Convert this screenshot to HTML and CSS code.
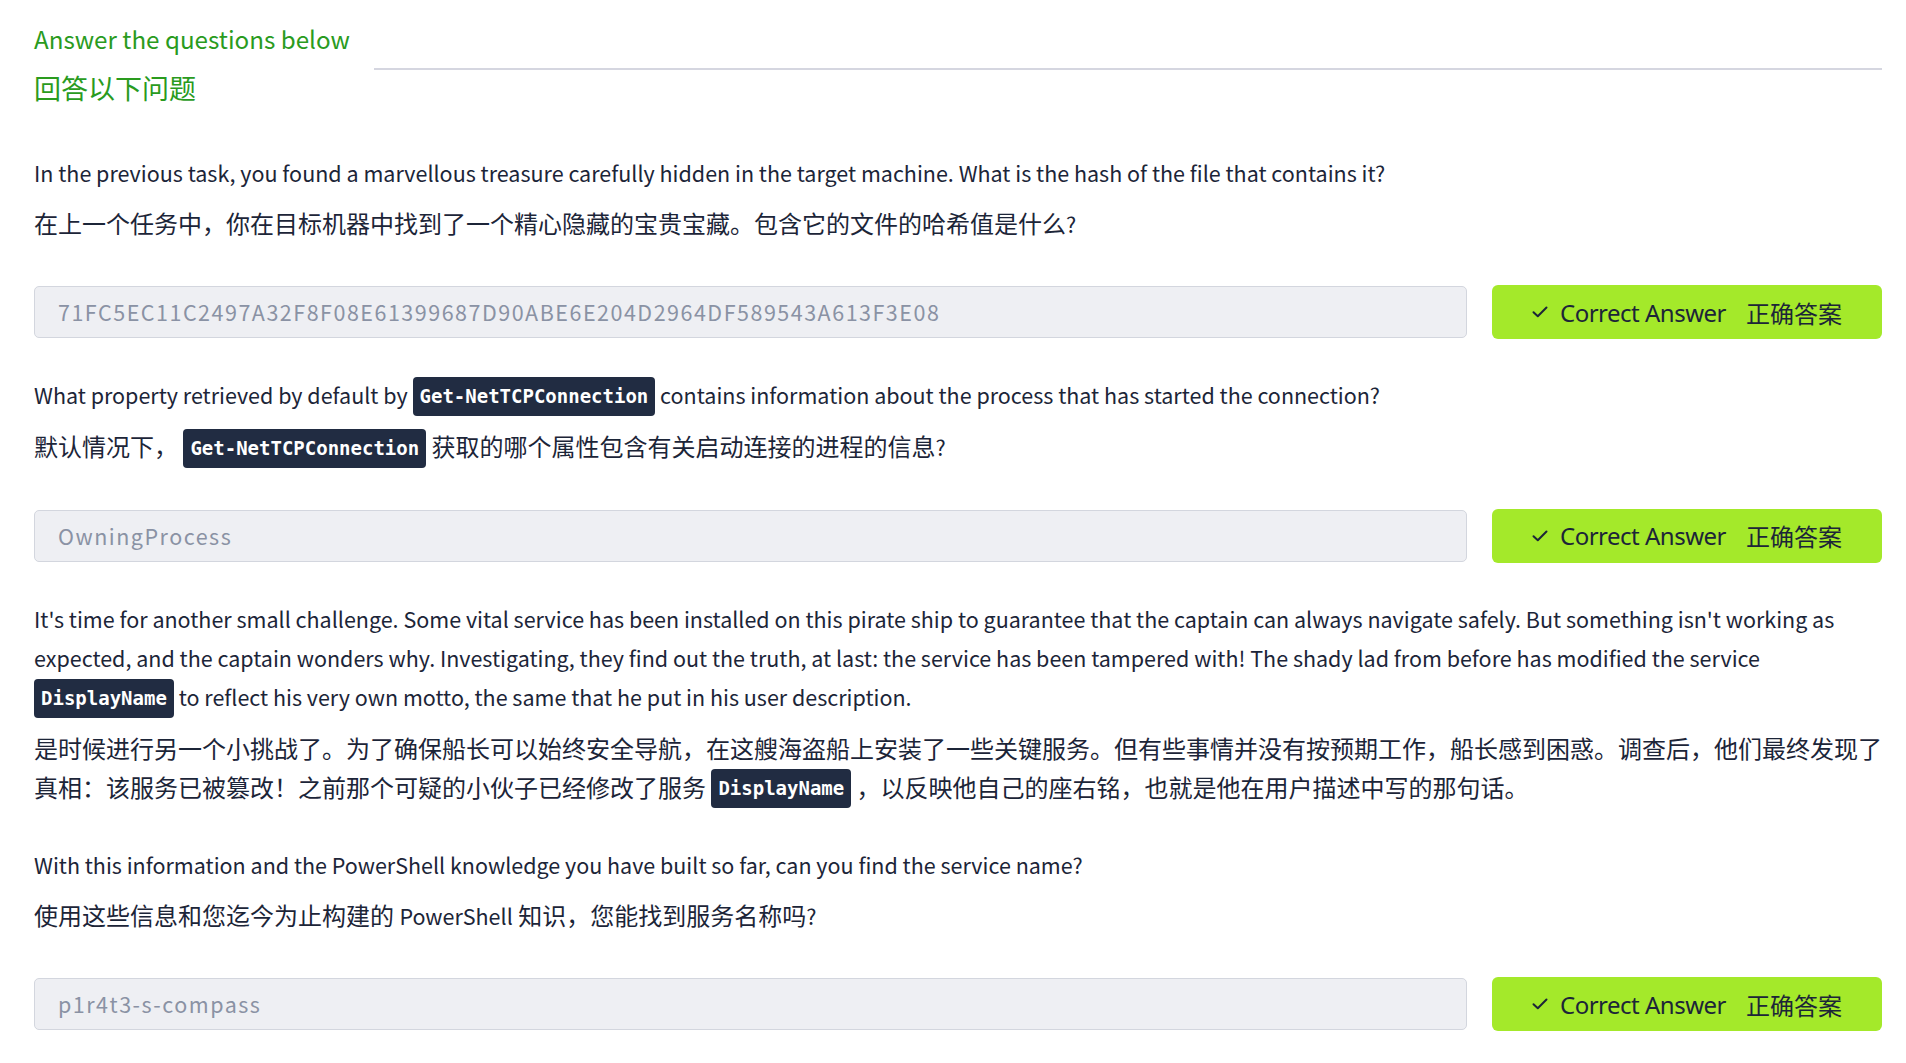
FILE: index.html
```html
<!DOCTYPE html>
<html lang="en">
<head>
<meta charset="utf-8">
<title>Answer the questions below</title>
<link rel="stylesheet" href="styles.css">
</head>
<body>
<main class="page">
  <header class="section-head">
    <div class="titles">
      <h3 class="title">Answer the questions below</h3>
      <h3 class="title title-cn">回答以下问题</h3>
    </div>
    <div class="rule"></div>
  </header>

  <section class="question">
    <div class="q-text">
      <p class="en">In the previous task, you found a marvellous treasure carefully hidden in the target machine. What is the hash of the file that contains it?</p>
      <p class="cn">在上一个任务中，你在目标机器中找到了一个精心隐藏的宝贵宝藏。包含它的文件的哈希值是什么<span class="lat">?</span></p>
    </div>
    <div class="answer-row">
      <div class="answer-input">71FC5EC11C2497A32F8F08E61399687D90ABE6E204D2964DF589543A613F3E08</div>
      <button class="correct-btn"><svg class="check" viewBox="0 0 16 12" width="16" height="12"><path d="M1.5 6.2 L5.8 10.2 L14.5 1.5" fill="none" stroke="currentColor" stroke-width="2" stroke-linecap="round" stroke-linejoin="round"/></svg><span class="btn-en">Correct Answer</span><span class="btn-cn">正确答案</span></button>
    </div>
  </section>

  <section class="question">
    <div class="q-text">
      <p class="en">What property retrieved by default by <code class="chip">Get-NetTCPConnection</code> contains information about the process that has started the connection?</p>
      <p class="cn">默认情况下， <code class="chip">Get-NetTCPConnection</code> 获取的哪个属性包含有关启动连接的进程的信息<span class="lat">?</span></p>
    </div>
    <div class="answer-row">
      <div class="answer-input">OwningProcess</div>
      <button class="correct-btn"><svg class="check" viewBox="0 0 16 12" width="16" height="12"><path d="M1.5 6.2 L5.8 10.2 L14.5 1.5" fill="none" stroke="currentColor" stroke-width="2" stroke-linecap="round" stroke-linejoin="round"/></svg><span class="btn-en">Correct Answer</span><span class="btn-cn">正确答案</span></button>
    </div>
  </section>

  <section class="question">
    <div class="q-text">
      <p class="en">It's time for another small challenge. Some vital service has been installed on this pirate ship to guarantee that the captain can always navigate safely. But something isn't working as expected, and the captain wonders why. Investigating, they find out the truth, at last: the service has been tampered with! The shady lad from before has modified the service <code class="chip">DisplayName</code> to reflect his very own motto, the same that he put in his user description.</p>
      <p class="cn">是时候进行另一个小挑战了。为了确保船长可以始终安全导航，在这艘海盗船上安装了一些关键服务。但有些事情并没有按预期工作，船长感到困惑。调查后，他们最终发现了真相：该服务已被篡改！之前那个可疑的小伙子已经修改了服务 <code class="chip">DisplayName</code> ，以反映他自己的座右铭，也就是他在用户描述中写的那句话。</p>
      <p class="en gap-top">With this information and the PowerShell knowledge you have built so far, can you find the service name?</p>
      <p class="cn">使用这些信息和您迄今为止构建的 <span class="lat">PowerShell</span> 知识，您能找到服务名称吗<span class="lat">?</span></p>
    </div>
    <div class="answer-row">
      <div class="answer-input">p1r4t3-s-compass</div>
      <button class="correct-btn"><svg class="check" viewBox="0 0 16 12" width="16" height="12"><path d="M1.5 6.2 L5.8 10.2 L14.5 1.5" fill="none" stroke="currentColor" stroke-width="2" stroke-linecap="round" stroke-linejoin="round"/></svg><span class="btn-en">Correct Answer</span><span class="btn-cn">正确答案</span></button>
    </div>
  </section>
</main>
</body>
</html>
```

FILE: styles.css
```css
html, body {
  margin: 0;
  padding: 0;
  background: #ffffff;
}

body {
  font-family: "Noto Sans CJK SC", "Noto Sans", sans-serif;
  color: #1c2538;
  font-size: 24px;
}

.page {
  padding: 14px 24px 0 34px;
}

.section-head {
  display: flex;
  align-items: flex-start;
  padding-bottom: 5px;
}

.titles {
  flex: 0 0 auto;
  padding-right: 24px;
}

.title {
  margin: 0;
  font-weight: 400;
  font-size: 24.2px;
  line-height: 49px;
  color: #2a9b1e;
}

.title-cn {
  font-size: 27px;
}

.rule {
  flex: 1;
  height: 2px;
  background: #d5d6e0;
  margin-top: 54px;
}

.question {
  margin-top: 36px;
}

.q-text p {
  margin: 0 0 11px;
  line-height: 39px;
}

.q-text p.en {
  font-size: 21.5px;
}

.q-text p.cn {
  font-size: 24px;
}

.lat {
  font-size: 21.5px;
}

.q-text p.gap-top {
  margin-top: 38px;
}

.chip {
  display: inline-block;
  font-family: "DejaVu Sans Mono", "Liberation Mono", monospace;
  font-weight: 700;
  font-size: 19px;
  line-height: 27px;
  padding: 6px 7px;
  margin: -4px 0 -1px;
  border-radius: 4px;
  background: #212c42;
  color: #ffffff;
  vertical-align: middle;
}

.answer-row {
  display: flex;
  gap: 25px;
  margin-top: 43px;
}

.answer-input {
  flex: 1;
  height: 52px;
  box-sizing: border-box;
  border: 1px solid #d3d6de;
  border-radius: 5px;
  background: #eeeff3;
  color: #8a92a4;
  padding: 0 23px;
  font-size: 21.5px;
  letter-spacing: 1.5px;
  line-height: 50px;
  white-space: nowrap;
  overflow: hidden;
}

.correct-btn {
  flex: 0 0 390px;
  height: 54px;
  margin-top: -1px;
  border: none;
  border-radius: 6px;
  background: #a4e92a;
  color: #1c2538;
  display: flex;
  align-items: center;
  justify-content: center;
  font-family: "Noto Sans", "Noto Sans CJK SC", sans-serif;
  font-size: 24px;
  padding: 0;
}

.check {
  margin-right: 12px;
  color: #1c2538;
}

.btn-en {
  letter-spacing: -0.5px;
}

.btn-cn {
  font-family: "Noto Sans CJK SC", sans-serif;
  margin-left: 20px;
}
```
